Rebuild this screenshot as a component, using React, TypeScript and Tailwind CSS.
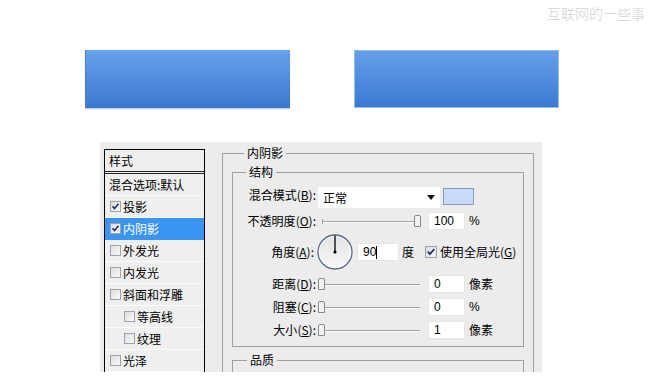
import React from 'react';

const cjk = "font-['Noto_Sans_CJK_SC','Noto_Sans',sans-serif]";
const num = "font-['Liberation_Sans',Arial,sans-serif]";

interface Effect {
  label: string;
  checked?: boolean;
  active?: boolean;
  indent?: boolean;
}

const effects: Effect[] = [
  { label: '投影', checked: true },
  { label: '内阴影', checked: true, active: true },
  { label: '外发光' },
  { label: '内发光' },
  { label: '斜面和浮雕' },
  { label: '等高线', indent: true },
  { label: '纹理', indent: true },
  { label: '光泽' },
];

function Box({ checked, size = 11 }: { checked?: boolean; size?: number }) {
  return (
    <svg width={size} height={size} viewBox="0 0 11 11" className="shrink-0">
      <defs>
        <linearGradient id="cbg" x1="0" y1="0" x2="1" y2="1">
          <stop offset="0" stopColor="#dcdcdc" />
          <stop offset="1" stopColor="#fbfbfb" />
        </linearGradient>
      </defs>
      <rect x="0.5" y="0.5" width="10" height="10" fill="url(#cbg)" stroke="#9aa3b0" />
      {checked && <path d="M2.5 5.2 L4.5 7.5 L8.5 2.8" fill="none" stroke="#1f2f6e" strokeWidth="1.6" />}
    </svg>
  );
}

function Slider({ at }: { at: 'left' | 'right' }) {
  const tx = at === 'left' ? 0.5 : 96.5;
  return (
    <svg width="104" height="14" viewBox="0 0 104 14" className="shrink-0">
      <line x1="4" y1="7.5" x2="102" y2="7.5" stroke="#a3a3a3" />
      <line x1="4" y1="8.5" x2="102" y2="8.5" stroke="#fafafa" />
      <line x1="4.5" y1="5" x2="4.5" y2="10" stroke="#a3a3a3" />
      <path d={`M${tx} 12.5 V3 Q${tx} 1.5 ${tx + 1.5} 1.5 H${tx + 4.5} Q${tx + 6} 1.5 ${tx + 6} 3 V12.5 Z`} fill="#f3f3f3" stroke="#8a8a8a" />
    </svg>
  );
}

function Field({ value, w = 'w-[37px]', cursor }: { value: string; w?: string; cursor?: boolean }) {
  return (
    <div className={`${w} h-[18px] bg-white border border-[#e6e6e6] flex items-center pl-[5px] text-[12px] text-black ${num}`}>
      {value}
      {cursor && <span className="w-px h-[13px] bg-black" />}
    </div>
  );
}

function Label({ text, k }: { text: string; k: string }) {
  return (
    <span className="w-[85px] pr-[2px] text-right shrink-0">
      {text}(<u>{k}</u>):
    </span>
  );
}

function SliderRow({ name, k, at, value, unit }: { name: string; k: string; at: 'left' | 'right'; value: string; unit: string }) {
  return (
    <div className="h-[23px] flex items-center">
      <Label text={name} k={k} />
      <Slider at={at} />
      <div className="ml-[6px]">
        <Field value={value} />
      </div>
      <span className={`ml-[4px] ${unit === '%' ? num : ''}`}>{unit}</span>
    </div>
  );
}

export default function App() {
  return (
    <div className={`w-[650px] h-[390px] bg-white overflow-hidden flex flex-col ${cjk} text-[12px] leading-[16px] text-black`}>
      <div className="h-[50px] flex justify-end items-start pt-[5px] pr-[5px]">
        <span className="text-[14px] leading-[16px] text-[#d2d2d2] font-light">互联网的一些事</span>
      </div>

      <div className="flex pl-[85px] gap-[64px]">
        <div className="w-[205px] h-[58px] bg-gradient-to-b from-[#68a2ec] to-[#3a78cf] shadow-[0_1px_1px_rgba(60,100,160,0.35)] border-l border-[#4d82c8]" />
        <div className="w-[205px] h-[58px] bg-gradient-to-b from-[#66a0ea] to-[#3b79d0] shadow-[inset_0_0_0_1px_#93bdf2]" />
      </div>

      <div className="mt-[34px] ml-[100px] w-[442px] h-[230px] bg-[#ececec] overflow-hidden flex items-start pt-[3px] pl-[4px]">
        <div className="mt-[4px] w-[101px] h-[300px] border-x border-t border-black bg-[#efefef] shrink-0">
          <div className="h-[24px] pl-[4px] pt-[3px] leading-[16px] border-b-[3px] border-double border-[#222]">样式</div>
          <div className="h-[22px] pl-[4px] flex items-center border-b border-[#fafafa]">混合选项:默认</div>
          {effects.map((e) => (
            <div
              key={e.label}
              className={`h-[22px] flex items-center gap-[2px] border-b ${e.active ? 'bg-[#3994f2] text-white border-[#3994f2]' : 'border-[#fafafa]'} ${e.indent ? 'pl-[19px]' : 'pl-[5px]'}`}
            >
              <Box checked={e.checked} />
              <span>{e.label}</span>
            </div>
          ))}
        </div>

        <fieldset className="ml-[17px] w-[312px] h-[300px] border border-[#a0a0a0] px-[9px] pt-[3px] shrink-0">
          <legend className="ml-[12px] px-[3px] leading-[16px]">内阴影</legend>

          <fieldset className="border border-[#a0a0a0] pt-[7px] pb-[5px]">
            <legend className="ml-[13px] px-[3px] leading-[16px]">结构</legend>

            <div className="h-[22px] flex items-start">
              <Label text="混合模式" k="B" />
              <div className="w-[122px] h-[21px] bg-white flex items-center pl-[5px] pr-[5px] justify-between">
                <span>正常</span>
                <svg width="8" height="5" viewBox="0 0 8 5">
                  <path d="M0 0 H8 L4 5 Z" fill="#111" />
                </svg>
              </div>
              <div className="ml-[3px] mt-[1px] w-[31px] h-[17px] bg-[#c8dbfb] border border-[#8c9bb4]" />
            </div>

            <SliderRow name="不透明度" k="O" at="right" value="100" unit="%" />

            <div className="h-[40px] flex items-center">
              <span className="w-[84px] pr-[3px] text-right shrink-0">
                角度(<u>A</u>):
              </span>
              <svg width="36" height="36" viewBox="0 0 36 36" className="shrink-0">
                <defs>
                  <linearGradient id="dial" x1="0" y1="0" x2="0" y2="1">
                    <stop offset="0" stopColor="#e2e2e2" />
                    <stop offset="1" stopColor="#f8f8f8" />
                  </linearGradient>
                </defs>
                <circle cx="18" cy="18" r="17" fill="url(#dial)" stroke="#5a6b88" strokeWidth="1.3" />
                <circle cx="18" cy="18" r="15.6" fill="none" stroke="#ffffff" strokeWidth="0.8" />
                <line x1="18" y1="18" x2="18" y2="1.5" stroke="#000" strokeWidth="1.3" />
                <circle cx="18" cy="18" r="1.6" fill="#000" />
              </svg>
              <div className="ml-[4px]">
                <Field value="90" w="w-[42px]" cursor />
              </div>
              <span className="ml-[3px]">度</span>
              <div className="ml-[11px] flex items-center gap-[3px]">
                <Box checked size={12} />
                <span>
                  使用全局光(<u>G</u>)
                </span>
              </div>
            </div>

            <SliderRow name="距离" k="D" at="left" value="0" unit="像素" />
            <SliderRow name="阻塞" k="C" at="left" value="0" unit="%" />
            <SliderRow name="大小" k="S" at="left" value="1" unit="像素" />
          </fieldset>

          <fieldset className="mt-[5px] h-[60px] border border-[#a0a0a0]">
            <legend className="ml-[14px] px-[3px] leading-[16px]">品质</legend>
          </fieldset>
        </fieldset>
      </div>
    </div>
  );
}
